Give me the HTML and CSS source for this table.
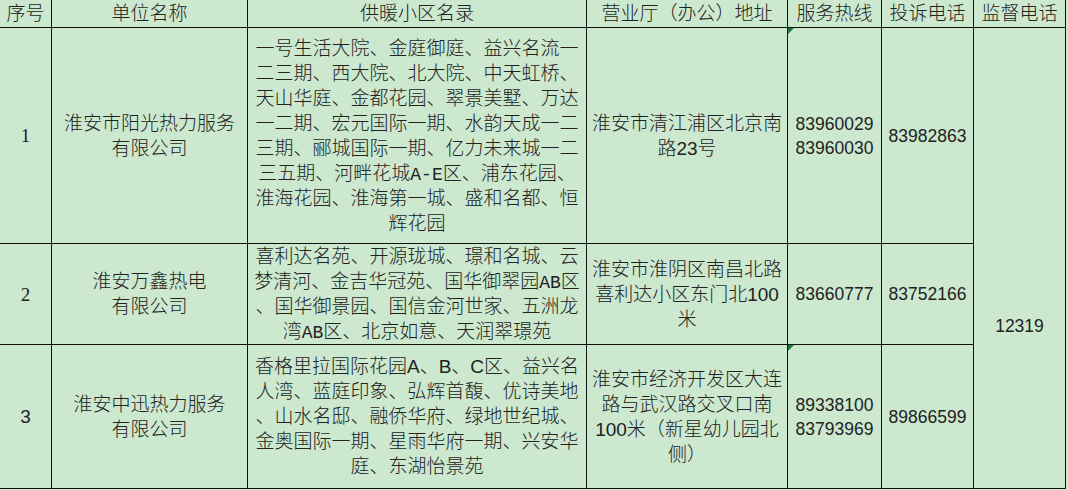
FILE: index.html
```html
<!DOCTYPE html>
<html lang="zh-CN">
<head>
<meta charset="utf-8">
<title>供暖单位</title>
<link rel="stylesheet" href="styles.css">
</head>
<body>
<table class="grid">
  <colgroup>
    <col class="c1"><col class="c2"><col class="c3"><col class="c4"><col class="c5"><col class="c6"><col class="c7">
  </colgroup>
  <thead>
    <tr class="head">
      <th>序号</th>
      <th>单位名称</th>
      <th>供暖小区名录</th>
      <th>营业厅（办公）地址</th>
      <th>服务热线</th>
      <th>投诉电话</th>
      <th>监督电话</th>
    </tr>
  </thead>
  <tbody>
    <tr class="r1">
      <td class="serif">1</td>
      <td>淮安市阳光热力服务<br>有限公司</td>
      <td>一号生活大院、金庭御庭、益兴名流一<br>二三期、西大院、北大院、中天虹桥、<br>天山华庭、金都花园、翠景美墅、万达<br>一二期、宏元国际一期、水韵天成一二<br>三期、郦城国际一期、亿力未来城一二<br>三五期、河畔花城<span class="mono">A-E</span>区、浦东花园、<br>淮海花园、淮海第一城、盛和名都、恒<br>辉花园</td>
      <td>淮安市清江浦区北京南<br>路23号</td>
      <td class="num flag">83960029<br>83960030</td>
      <td class="num">83982863</td>
      <td class="num super" rowspan="3">12319</td>
    </tr>
    <tr class="r2">
      <td class="serif">2</td>
      <td>淮安万鑫热电<br>有限公司</td>
      <td>喜利达名苑、开源珑城、璟和名城、云<br>梦清河、金吉华冠苑、国华御翠园<span class="mono">AB</span>区<br>、国华御景园、国信金河世家、五洲龙<br>湾<span class="mono">AB</span>区、北京如意、天润翠璟苑</td>
      <td>淮安市淮阴区南昌北路<br>喜利达小区东门北100<br>米</td>
      <td class="num">83660777</td>
      <td class="num">83752166</td>
    </tr>
    <tr class="r3">
      <td>3</td>
      <td>淮安中迅热力服务<br>有限公司</td>
      <td>香格里拉国际花园A、B、C区、益兴名<br>人湾、蓝庭印象、弘辉首馥、优诗美地<br>、山水名邸、融侨华府、绿地世纪城、<br>金奥国际一期、星雨华府一期、兴安华<br>庭、东湖怡景苑</td>
      <td>淮安市经济开发区大连<br>路与武汉路交叉口南<br>100米（新星幼儿园北<br>侧）</td>
      <td class="num flag">89338100<br>83793969</td>
      <td class="num">89866599</td>
    </tr>
  </tbody>
</table>
</body>
</html>
```

FILE: styles.css
```css
html, body {
  margin: 0;
  padding: 0;
  background: #cce8cf;
}
body {
  width: 1068px;
  height: 490px;
  overflow: hidden;
  font-family: "Liberation Sans", "Noto Sans CJK SC", sans-serif;
  font-size: 19px;
  font-weight: 300;
  color: #222;
}
.grid {
  border-collapse: collapse;
  table-layout: fixed;
  width: 1066px;
  margin: -1px 0 0 -1px;
}
.c1 { width: 52px; }
.c2 { width: 196px; }
.c3 { width: 339px; }
.c4 { width: 201px; }
.c5 { width: 94px; }
.c6 { width: 92px; }
.c7 { width: 92px; }
.grid th,
.grid td {
  border: 1px solid #111;
  padding: 0;
  text-align: center;
  vertical-align: middle;
  white-space: nowrap;
  line-height: 25px;
  font-weight: 300;
}
.head { height: 28px; }
.grid .head th { line-height: 27px; }
.r1 { height: 216px; }
.r2 { height: 101px; }
.r3 { height: 144px; }
.grid td.num {
  font-size: 17.5px;
  line-height: 24px;
}
.grid td.serif {
  font-family: "Liberation Serif", serif;
}
.mono {
  font-family: "Liberation Mono", monospace;
  font-size: 18px;
  line-height: 1;
}
.grid td.super {
  vertical-align: top;
  padding-top: 286px;
}
.flag {
  position: relative;
}
.flag::before {
  content: "";
  position: absolute;
  left: 0;
  top: 0;
  width: 0;
  height: 0;
  border-top: 6px solid #1f7a3a;
  border-right: 6px solid transparent;
}
```
